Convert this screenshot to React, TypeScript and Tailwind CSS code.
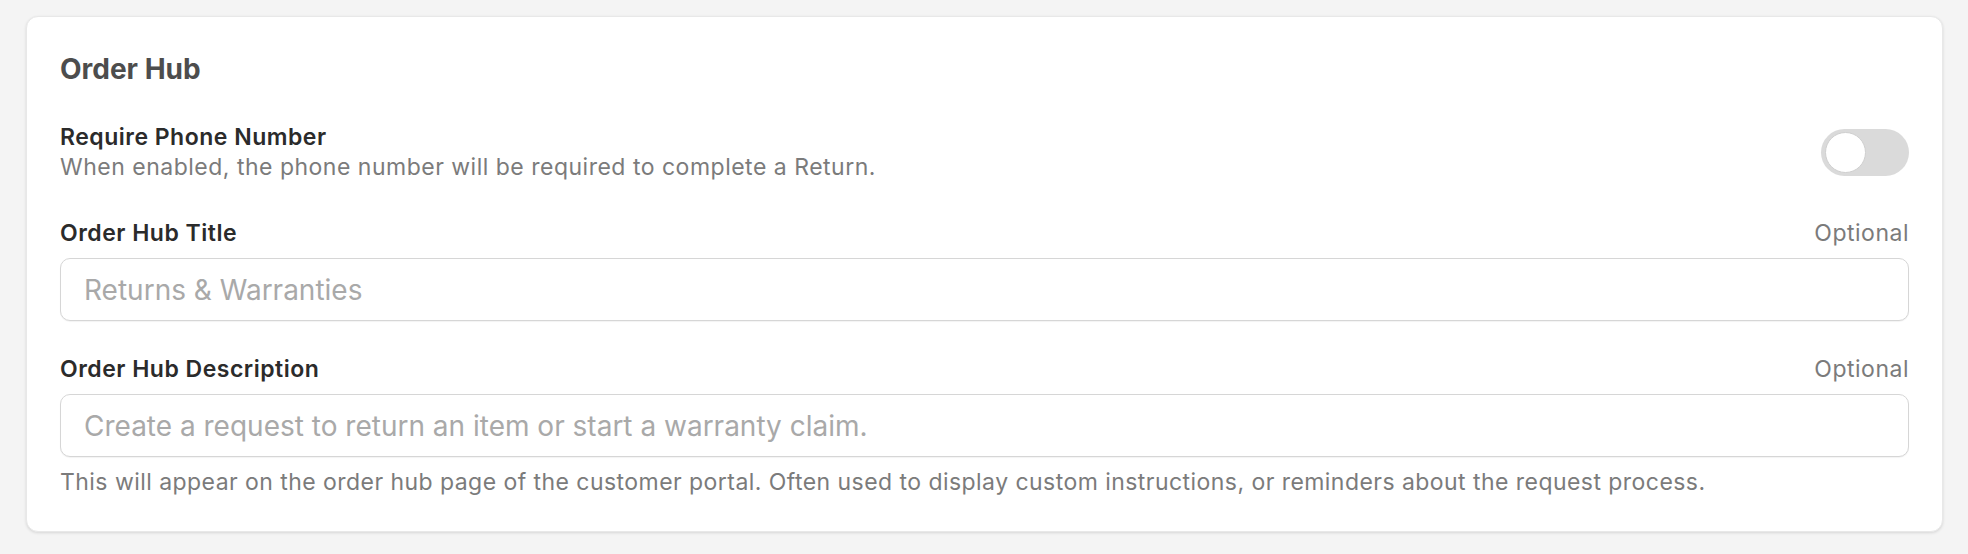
import React from "react";

function Field({
  label,
  placeholder,
  help,
  gapTop,
}: {
  label: string;
  placeholder: string;
  help?: string;
  gapTop: string;
}) {
  return (
    <div className={gapTop}>
      <div className="flex items-center justify-between">
        <span className="text-[23px] leading-[30px] tracking-[0.5px] font-semibold text-[#2b2b2b]">{label}</span>
        <span className="text-[23px] leading-[30px] tracking-[0.5px] text-[#7b7b7b]">Optional</span>
      </div>
      <input
        type="text"
        placeholder={placeholder}
        className="mt-[10px] block w-full h-[63px] rounded-[10px] border border-[#d6d6d6] bg-white px-[23px] text-[28px] text-[#2b2b2b] placeholder:text-[#a9a9a9] shadow-[0_1px_1px_rgba(0,0,0,0.05)] outline-none"
      />
      {help && (
        <p className="mt-[10px] text-[23px] leading-[30px] tracking-[0.45px] text-[#7b7b7b]">{help}</p>
      )}
    </div>
  );
}

export default function App() {
  return (
    <div className="min-h-[554px] bg-[#f4f4f4] pt-[16px] pl-[26px] pr-[25px] font-['Inter',sans-serif]">
      <div className="rounded-[12px] border border-[#e8e8e8] bg-white px-[33px] pt-[34px] pb-[34px] shadow-[0_1px_3px_rgba(0,0,0,0.12)]">
        <h2 className="text-[28px] leading-[36px] font-bold text-[#4d4d4d]">Order Hub</h2>

        <div className="mt-[35px] flex items-center justify-between">
          <div>
            <div className="text-[23px] leading-[30px] tracking-[0.5px] font-semibold text-[#2b2b2b]">Require Phone Number</div>
            <div className="text-[23px] leading-[30px] tracking-[0.5px] text-[#7b7b7b]">
              When enabled, the phone number will be required to complete a Return.
            </div>
          </div>
          <button
            type="button"
            className="relative h-[47px] w-[88px] shrink-0 rounded-full bg-[#dadada]"
            aria-label="Require Phone Number"
          >
            <span className="absolute left-[4px] top-[3px] h-[41px] w-[41px] rounded-full border border-[#cfcfcf] bg-white" />
          </button>
        </div>

        <Field label="Order Hub Title" placeholder="Returns & Warranties" gapTop="mt-[36px]" />
        <Field
          label="Order Hub Description"
          placeholder="Create a request to return an item or start a warranty claim."
          help="This will appear on the order hub page of the customer portal. Often used to display custom instructions, or reminders about the request process."
          gapTop="mt-[33px]"
        />
      </div>
    </div>
  );
}
